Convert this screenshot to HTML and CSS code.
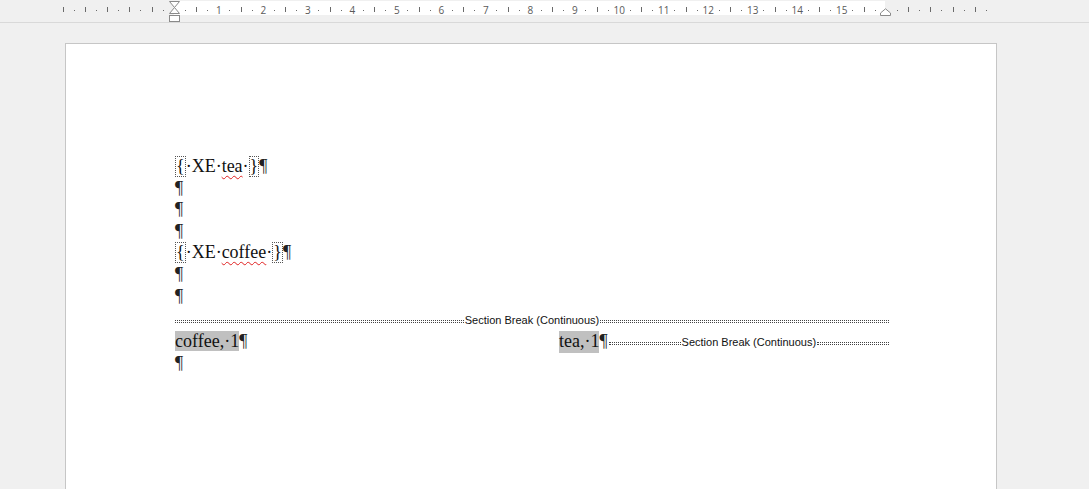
FILE: index.html
```html
<!DOCTYPE html>
<html>
<head>
<meta charset="utf-8">
<link rel="stylesheet" href="styles.css">
</head>
<body>
<div class="ruler">
  <div class="ticks">
    <i class="t l"></i><i class="t d"></i><i class="t l"></i><i class="t d"></i><i class="t l"></i><i class="t d"></i><i class="t l"></i><i class="t d"></i><i class="t l"></i><i class="t d"></i><i class="t"></i>
    <i class="t d"></i><i class="t l"></i><i class="t d"></i><i class="t n">1</i>
    <i class="t d"></i><i class="t l"></i><i class="t d"></i><i class="t n">2</i>
    <i class="t d"></i><i class="t l"></i><i class="t d"></i><i class="t n">3</i>
    <i class="t d"></i><i class="t l"></i><i class="t d"></i><i class="t n">4</i>
    <i class="t d"></i><i class="t l"></i><i class="t d"></i><i class="t n">5</i>
    <i class="t d"></i><i class="t l"></i><i class="t d"></i><i class="t n">6</i>
    <i class="t d"></i><i class="t l"></i><i class="t d"></i><i class="t n">7</i>
    <i class="t d"></i><i class="t l"></i><i class="t d"></i><i class="t n">8</i>
    <i class="t d"></i><i class="t l"></i><i class="t d"></i><i class="t n">9</i>
    <i class="t d"></i><i class="t l"></i><i class="t d"></i><i class="t n">10</i>
    <i class="t d"></i><i class="t l"></i><i class="t d"></i><i class="t n">11</i>
    <i class="t d"></i><i class="t l"></i><i class="t d"></i><i class="t n">12</i>
    <i class="t d"></i><i class="t l"></i><i class="t d"></i><i class="t n">13</i>
    <i class="t d"></i><i class="t l"></i><i class="t d"></i><i class="t n">14</i>
    <i class="t d"></i><i class="t l"></i><i class="t d"></i><i class="t n">15</i>
    <i class="t d"></i><i class="t l"></i><i class="t d"></i><i class="t"></i>
    <i class="t d"></i><i class="t l"></i><i class="t d"></i><i class="t l"></i><i class="t d"></i><i class="t l"></i><i class="t d"></i><i class="t l"></i><i class="t d"></i>
  </div>
  <svg class="mk-left" width="13" height="23" viewBox="0 0 13 23">
    <path d="M1.5 1.5 H11.5 L6.5 7.5 Z" fill="#fff" stroke="#8a8a8a" stroke-width="1"/>
    <path d="M6.5 7.5 L11.5 13.5 H1.5 Z" fill="#fff" stroke="#8a8a8a" stroke-width="1"/>
    <rect x="1.5" y="15.5" width="10" height="6" fill="#fff" stroke="#8a8a8a" stroke-width="1"/>
  </svg>
  <svg class="mk-right" width="13" height="9" viewBox="0 0 13 9">
    <path d="M1.5 7.5 V5 L6.5 0.8 L11.5 5 V7.5 Z" fill="#fff" stroke="#8a8a8a" stroke-width="1"/>
  </svg>
</div>

<div class="page">
  <div class="content">
    <p class="para"><span class="fb">{</span>·XE·<span class="sp">tea</span>·<span class="fb">}</span><span class="pm">¶</span></p>
    <p class="para"><span class="pm">¶</span></p>
    <p class="para"><span class="pm">¶</span></p>
    <p class="para"><span class="pm">¶</span></p>
    <p class="para"><span class="fb">{</span>·XE·<span class="sp">coffee</span>·<span class="fb">}</span><span class="pm">¶</span></p>
    <p class="para"><span class="pm">¶</span></p>
    <p class="para"><span class="pm">¶</span></p>
    <div class="sbreak main"><span class="dots"></span><span class="sb-label">Section Break (Continuous)</span><span class="dots"></span></div>
    <div class="cols">
      <p class="para"><span class="hl">coffee,·1</span><span class="pm">¶</span></p>
      <div class="para rowline"><span class="hl">tea,·1</span><span class="pm">¶</span><div class="sbreak inline"><span class="dots"></span><span class="sb-label">Section Break (Continuous)</span><span class="dots"></span></div></div>
    </div>
    <p class="para"><span class="pm">¶</span></p>
  </div>
</div>
</body>
</html>
```

FILE: styles.css
```css
html, body {
  margin: 0;
  padding: 0;
  background: #f0f0f0;
  overflow: hidden;
  height: 489px;
}

.ruler {
  position: relative;
  height: 22px;
  border-bottom: 1px solid #d9d9d9;
  background-color: #f0f0f0;
  background-image: linear-gradient(to right, transparent 174px, #ffffff 174px, #ffffff 885px, transparent 885px);
  background-size: 100% 14px;
  background-position: 0 1px;
  background-repeat: no-repeat;
}

.ticks {
  display: flex;
  height: 19px;
  margin-left: 57.45px;
  font-family: "Open Sans", "Liberation Sans", sans-serif;
  font-size: 10px;
  color: #5a5a5a;
}

.t {
  flex: none;
  width: 11.125px;
  display: flex;
  justify-content: center;
  align-items: center;
  font-style: normal;
  line-height: 1;
}

.t.d::before {
  content: "";
  width: 1px;
  height: 1px;
  background: #6a6a6a;
  margin-top: 1px;
}

.t.l::before {
  content: "";
  width: 1px;
  height: 5px;
  background: #6a6a6a;
}

.t.n {
  padding-top: 1px;
}

.mk-left {
  position: absolute;
  left: 168px;
  top: 0;
}

.mk-right {
  position: absolute;
  left: 879px;
  top: 8px;
}

.page {
  margin: 20px 0 0 65px;
  width: 930px;
  height: 445px;
  background: #ffffff;
  border: 1px solid #c6c6c6;
  border-bottom: none;
}

.content {
  padding: 112px 107px 0 109px;
  font-family: "Liberation Serif", "Times New Roman", serif;
  font-size: 18px;
  color: #111;
}

.para {
  margin: 0;
  height: 21.6px;
  line-height: 21.6px;
  white-space: nowrap;
}

.pm {
  color: #222;
}

.fb {
  display: inline-block;
  border: 1px dotted #555;
  line-height: 19px;
  padding: 0;
  vertical-align: top;
  margin-top: 0;
}

.sp {
  text-decoration: underline wavy #e02020;
  text-decoration-thickness: 1px;
  text-underline-offset: 3px;
}

.hl {
  background: #c0c0c0;
}

.sbreak {
  display: flex;
  align-items: center;
}

.sbreak.main {
  height: 22px;
  margin-top: 2px;
}

.dots {
  flex: 1;
  height: 1px;
  border-top: 1px dotted #444;
  border-bottom: 1px dotted #444;
  margin-top: 3px;
}

.sb-label {
  font-family: "Liberation Sans", Arial, sans-serif;
  font-size: 11px;
  color: #111;
  padding: 0 1px;
  line-height: 14px;
}

.cols {
  display: grid;
  grid-template-columns: 1fr 1fr;
  column-gap: 54px;
  height: 22px;
  align-items: center;
}

.rowline {
  display: flex;
  align-items: center;
}

.sbreak.inline {
  flex: 1;
  margin-left: 1px;
}
```
